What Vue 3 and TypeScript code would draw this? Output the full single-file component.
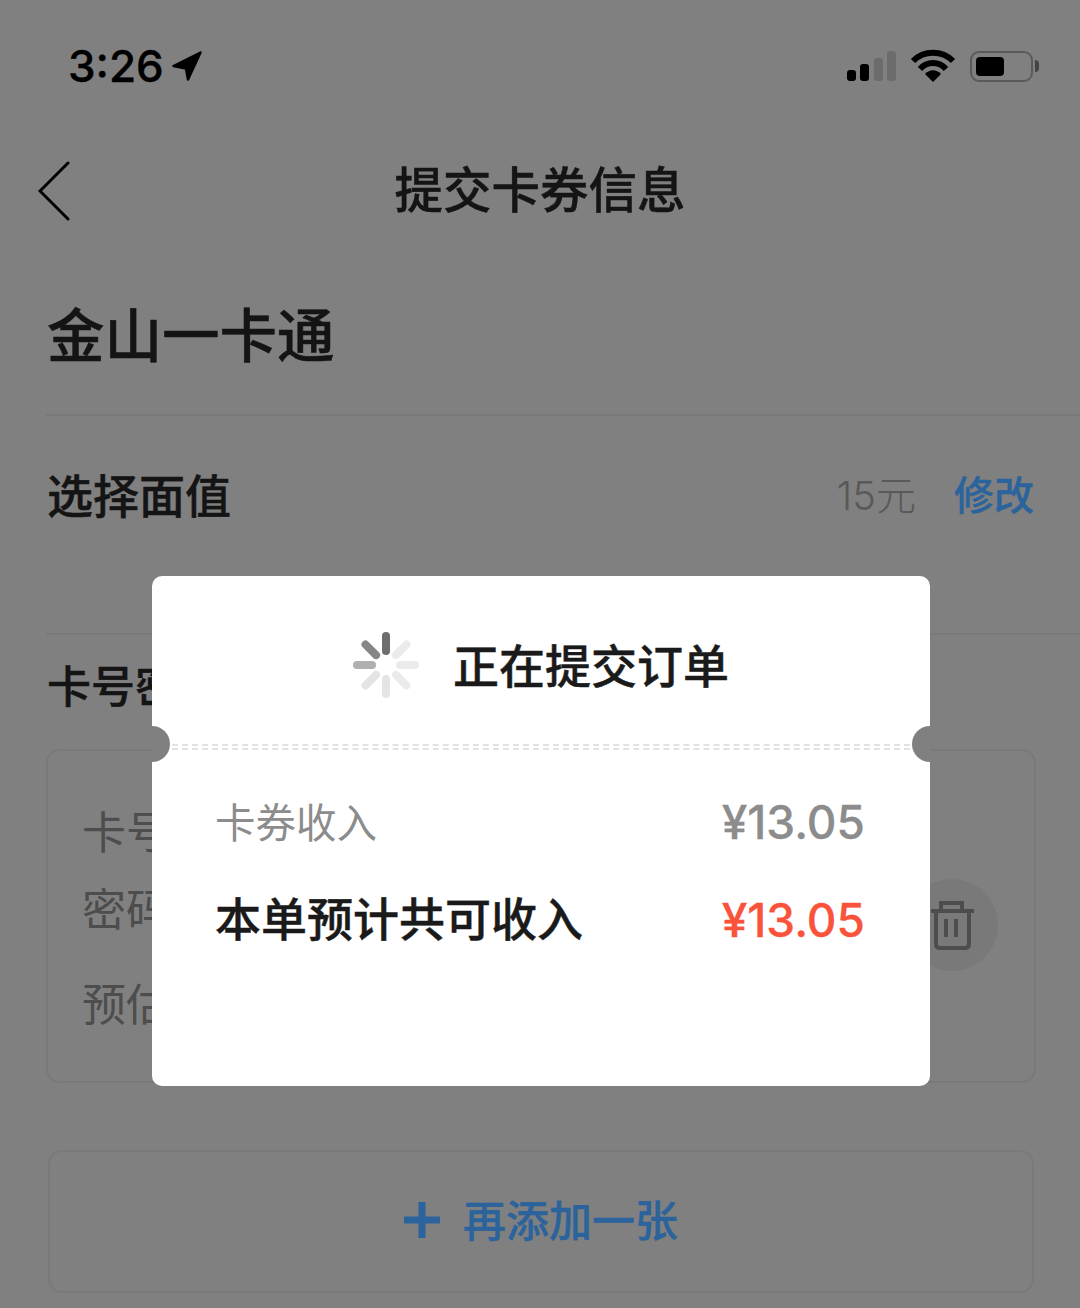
<template>
  <div class="page">
    <div class="status_bar">
      <div class="time">
        <span>3:26</span>
        <svg class="arrow" width="30" height="30" viewBox="0 0 30 30">
          <path d="M28.5 1.5 L1.5 15 L14 17.5 L16 28.5 Z" fill="#000" stroke="#000" stroke-width="2.5" stroke-linejoin="round" />
        </svg>
      </div>
      <div class="status_icons">
        <div class="signal">
          <i v-for="bar in signalBars" :key="bar.height" :class="{ off: bar.off }" :style="{ height: bar.height + 'px' }"></i>
        </div>
        <svg width="46" height="34" viewBox="0 0 46 34">
          <path d="M3 12 C14 1 32 1 43 12" fill="none" stroke="#000" stroke-width="6" />
          <path d="M10 20 C17 12 29 12 36 20" fill="none" stroke="#000" stroke-width="6" />
          <path d="M15 25 C20 20 26 20 31 25 L23 33 Z" fill="#000" />
        </svg>
        <div class="battery"><i></i></div>
      </div>
    </div>

    <header class="nav">
      <svg class="back" width="32" height="60" viewBox="0 0 32 60">
        <path d="M30 2 L2 30 L30 58" fill="none" stroke="#000" stroke-width="3" stroke-linecap="round" />
      </svg>
      <h1>提交卡券信息</h1>
    </header>

    <h2 class="card_name"><span>金山一卡通</span></h2>

    <div class="row_value">
      <span class="row_title">选择面值</span>
      <span class="value">15元</span>
      <span class="edit">修改</span>
    </div>

    <h3 class="section_title">卡号密码</h3>

    <section class="card_box">
      <p class="line_code">卡号</p>
      <p class="line_pass">密码</p>
      <p class="line_income">预估</p>
      <div class="delete">
        <svg width="47" height="52" viewBox="0 0 47 52">
          <path d="M2 12 H45 M12 12 V4 H33 V12 M7 12 V45 Q7 49 11 49 H36 Q40 49 40 45 V12 M17 20 V38 M27 20 V38" fill="none" stroke="#4d4d4d" stroke-width="4" />
        </svg>
      </div>
    </section>

    <button class="add_more">
      <svg class="plus" width="36" height="36" viewBox="0 0 36 36">
        <path d="M0 18 H36 M18 0 V36" stroke="#2b639c" stroke-width="7" />
      </svg>
      <span>再添加一张</span>
    </button>

    <article class="modal">
      <div class="modal_head">
        <svg class="spinner" width="66" height="66" viewBox="0 0 66 66">
          <line
            v-for="(spoke, i) in spokes"
            :key="i"
            x1="33"
            y1="4"
            x2="33"
            y2="19"
            :stroke="spoke"
            stroke-width="8"
            stroke-linecap="round"
            :transform="`rotate(${i * 45} 33 33)`"
          />
        </svg>
        <span>正在提交订单</span>
      </div>
      <div class="ticket_line"></div>
      <div class="amount amount_light">
        <span>卡券收入</span>
        <b>¥13.05</b>
      </div>
      <div class="amount amount_total">
        <span>本单预计共可收入</span>
        <b>¥13.05</b>
      </div>
    </article>
  </div>
</template>

<script setup lang="ts">
const signalBars = [
  { height: 11, off: false },
  { height: 17, off: false },
  { height: 23, off: true },
  { height: 30, off: true },
];

// primera barra arriba, sentido horario
const spokes: string[] = [
  "#6e6e6e",
  "#ebebeb",
  "#ebebeb",
  "#ebebeb",
  "#e4e4e4",
  "#e4e4e4",
  "#b0b0b0",
  "#868686",
];
</script>

<style>
body {
  background: #808080;
}
</style>

<style scoped>
.page {
  position: relative;
  width: 1080px;
  height: 1308px;
  overflow: hidden;
  background: #808080;
  color: #141414;
  font-family: "Noto Sans CJK SC", "Noto Sans", sans-serif;
}

.status_bar {
  height: 132px;
  display: flex;
  justify-content: space-between;
  align-items: center;
  padding: 0 47px 0 68px;
  box-sizing: border-box;
}
.time {
  display: flex;
  align-items: center;
  gap: 8px;
  font-family: Inter, "Liberation Sans", sans-serif;
  font-size: 44px;
  font-weight: 500;
  line-height: 1;
  color: #000;
  -webkit-text-stroke: 0.4px #000;
}
.status_icons {
  display: flex;
  align-items: center;
  gap: 14px;
}
.signal {
  display: flex;
  align-items: flex-end;
  gap: 4.5px;
  height: 30px;
}
.signal i {
  width: 9px;
  border-radius: 3px;
  background: #000;
}
.signal i.off {
  background: #6c6c6c;
}
.battery {
  position: relative;
  width: 63px;
  height: 31px;
  box-sizing: border-box;
  padding: 4px;
  border: 2px solid #5a5a5a;
  border-radius: 9px;
}
.battery i {
  display: block;
  width: 28px;
  height: 100%;
  border-radius: 4px;
  background: #000;
}
.battery::after {
  content: "";
  position: absolute;
  top: 7px;
  right: -8px;
  width: 4px;
  height: 12px;
  border-radius: 0 4px 4px 0;
  background: #444;
}

.nav {
  position: relative;
  height: 116px;
  padding-bottom: 6px;
  box-sizing: border-box;
  display: flex;
  align-items: center;
  justify-content: center;
}
.nav h1 {
  margin: 0;
  font-size: 48.5px;
  font-weight: 500;
  line-height: 1;
  -webkit-text-stroke: 0.45px #141414;
}
.back {
  position: absolute;
  left: 38px;
  top: 29px;
}

.card_name {
  height: 168px;
  margin: 0 0 0 46px;
  padding: 4px 0 0 1px;
  box-sizing: border-box;
  display: flex;
  align-items: center;
  border-bottom: 2px solid #797979;
  font-size: 57.5px;
  font-weight: 500;
  line-height: 1;
  -webkit-text-stroke: 0.5px #141414;
}

.row_value {
  height: 219px;
  margin-left: 46px;
  padding: 0 46px 64px 1px;
  box-sizing: border-box;
  display: flex;
  align-items: center;
  border-bottom: 2px solid #797979;
}
.row_title {
  flex: 1;
  font-size: 46px;
  font-weight: 500;
  -webkit-text-stroke: 0.45px #141414;
}
.value {
  margin-right: 38px;
  font-family: Inter, "Noto Sans CJK SC", sans-serif;
  font-size: 40px;
  font-weight: 300;
  color: #595959;
}
.edit {
  font-size: 40px;
  font-weight: 500;
  color: #2b639c;
  -webkit-text-stroke: 0.35px #2b639c;
}

.section_title {
  height: 114px;
  margin: 0 0 0 47px;
  display: flex;
  align-items: center;
  padding-bottom: 16px;
  box-sizing: border-box;
  font-size: 44px;
  font-weight: 500;
  -webkit-text-stroke: 0.45px #141414;
}

.card_box {
  position: relative;
  height: 334px;
  margin: 0 44px 0 46px;
  box-sizing: border-box;
  padding-left: 34px;
  border: 2px solid #797979;
  border-radius: 14px;
  font-size: 44px;
  color: #4d4d4d;
}
.card_box p {
  margin: 0;
  line-height: 60px;
}
.line_code {
  padding-top: 49px;
}
.line_pass {
  padding-top: 17px;
}
.line_income {
  padding-top: 35px;
}
.delete {
  position: absolute;
  right: 36px;
  top: 128px;
  width: 92px;
  height: 92px;
  border-radius: 50%;
  background: #797979;
  display: flex;
  align-items: center;
  justify-content: center;
}

.add_more {
  width: 986px;
  height: 143px;
  margin: 67px 0 0 48px;
  padding: 0 0 8px;
  box-sizing: border-box;
  display: flex;
  align-items: center;
  justify-content: center;
  gap: 23px;
  background: none;
  border: 2px solid #797979;
  border-radius: 14px;
  font-family: inherit;
  font-size: 43px;
  font-weight: 500;
  color: #2b639c;
  -webkit-text-stroke: 0.4px #2b639c;
}
.plus {
  margin-top: 4px;
}

.modal {
  position: absolute;
  top: 576px;
  left: 152px;
  width: 778px;
  height: 510px;
  overflow: hidden;
  background: #fff;
  border-radius: 10px;
}
.modal_head {
  height: 168px;
  display: flex;
  align-items: center;
  justify-content: center;
  gap: 34px;
  padding-top: 6px;
  box-sizing: border-box;
  font-size: 46px;
  font-weight: 500;
  color: #1a1a1a;
  -webkit-text-stroke: 0.45px #1a1a1a;
}
.spinner {
  margin-top: 4px;
}
.ticket_line {
  height: 2px;
  margin: 0 20px;
  border-top: 2px dashed #e2e2e2;
  border-bottom: 2px dashed #e2e2e2;
}
.ticket_line::before,
.ticket_line::after {
  content: "";
  position: absolute;
  top: 150px;
  width: 36px;
  height: 36px;
  border-radius: 50%;
  background: #808080;
}
.ticket_line::before {
  left: -18px;
}
.ticket_line::after {
  right: -18px;
}
.amount {
  display: flex;
  justify-content: space-between;
  align-items: center;
  padding: 0 65px 0 63px;
}
.amount b {
  font-family: Inter, "Liberation Sans", sans-serif;
  font-weight: 500;
  font-size: 46px;
  -webkit-text-stroke: 0.3px currentColor;
}
.amount_light {
  height: 60px;
  margin-top: 42px;
  font-size: 40.5px;
  color: #8c8c8c;
}
.amount_light span {
  margin-bottom: 4px;
}
.amount_total {
  height: 60px;
  margin-top: 38px;
  font-size: 46px;
  font-weight: 500;
  color: #1a1a1a;
}
.amount_total span {
  margin-bottom: 8px;
  -webkit-text-stroke: 0.45px #1a1a1a;
}
.amount_total b {
  color: #f9533c;
}
</style>
